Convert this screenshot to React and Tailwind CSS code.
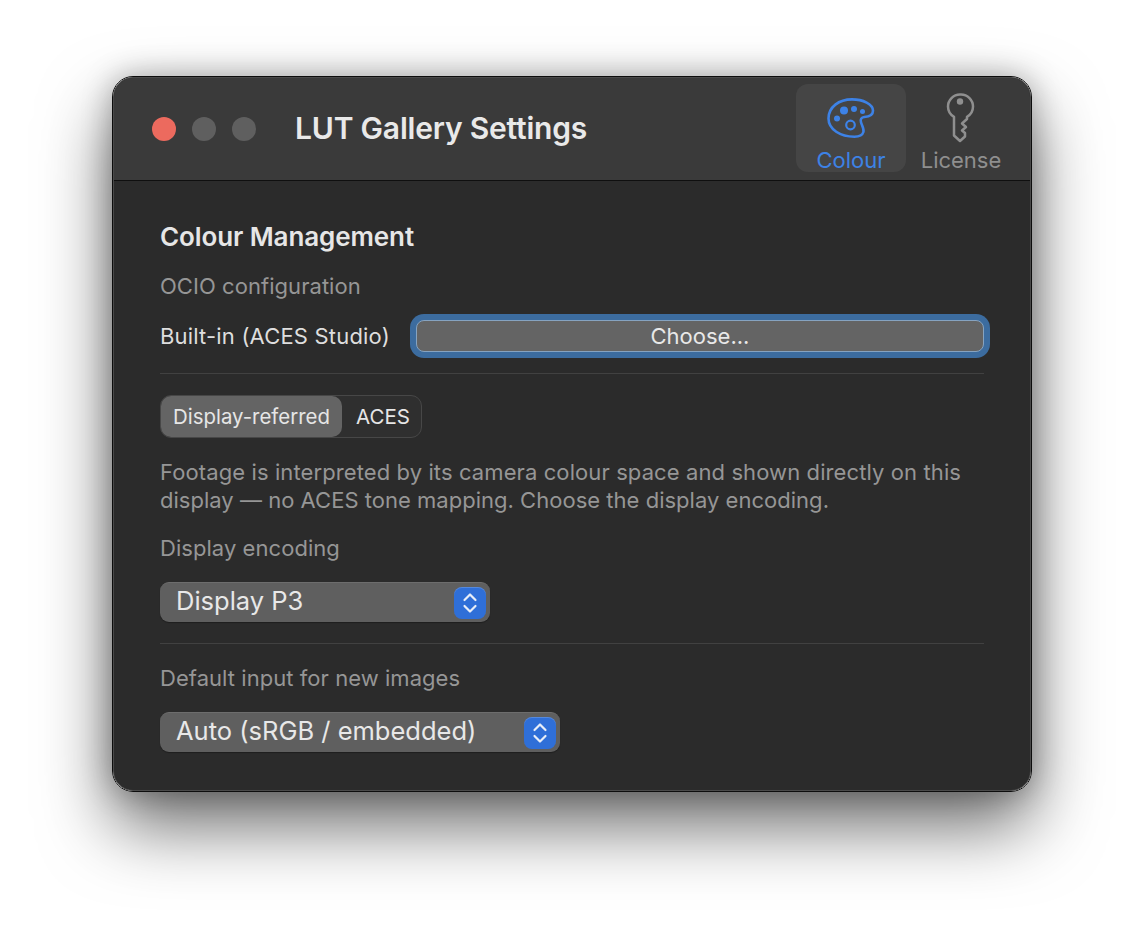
function Palette() {
  return (
    <svg width="52" height="44" viewBox="0 0 52 44" fill="none" className="block">
      <path d="M3.500 22.500C3.500 11 14 3.400 27 3.400c11 0 21 4.600 21 11.300 0 5.200-5.400 6-8.600 6.300-3 .3-4.400 2.200-3.400 5.400 1 3.400 3.300 6.400 2.400 9.600-.9 3-4.200 4.700-9 4.700C15.500 40.700 3.500 33.500 3.500 22.500Z" stroke="#3d82e6" strokeWidth="2.600" strokeLinejoin="round" />
      <circle cx="19" cy="14.500" r="4" fill="#3d82e6" />
      <circle cx="29" cy="13" r="3" fill="#3d82e6" />
      <circle cx="37.500" cy="15.500" r="2.500" fill="#3d82e6" />
      <circle cx="12" cy="22.500" r="3" fill="#3d82e6" />
      <circle cx="25.500" cy="29" r="4.300" stroke="#3d82e6" strokeWidth="2.200" />
    </svg>
  );
}

function Key() {
  return (
    <svg width="30" height="52" viewBox="0 0 30 52" fill="none" className="block">
      <path d="M14 2.500a12 12 0 0 0-12 12c0 4.600 2.500 8.300 6 10.300V43.500L14 49l5-4.500v-3.500l-3-2.500 4-3.500-4-3.500 5-4.500V24.800c3.500-2 6-5.700 6-10.300a12 12 0 0 0-12-12Z" stroke="#8f8f8f" strokeWidth="2.500" strokeLinejoin="round" />
      <circle cx="14" cy="9.500" r="3.200" fill="#8f8f8f" />
    </svg>
  );
}

function Stepper() {
  return (
    <div className="w-8 h-8 rounded-lg bg-[#2f6fd8] flex items-center justify-center shadow-[inset_0_1px_0_rgba(255,255,255,0.18)]">
      <svg width="16" height="24" viewBox="0 0 16 24" fill="none">
        <path d="M2.500 9 8 3.500 13.500 9M2.500 15 8 20.500 13.500 15" stroke="#e8eef8" strokeWidth="2.200" strokeLinecap="round" strokeLinejoin="round" />
      </svg>
    </div>
  );
}

function Select({ label, width }) {
  return (
    <div className={`${width} h-10 mt-5 rounded-[9px] bg-[#5f5f5f] border-t border-[#6d6d6d] flex items-center justify-between pl-4 pr-1 shadow-[0_1px_1px_rgba(0,0,0,0.3)]`}>
      <span className="text-[25.500px] leading-none text-[#e8e8e8] pb-[4px]">{label}</span>
      <Stepper />
    </div>
  );
}

function Label({ children, cls = "mt-5" }) {
  return <div className={`${cls} text-[22px] leading-7 text-[#969696] tracking-[0.05px]`}>{children}</div>;
}

function Divider({ cls }) {
  return <div className={`${cls} h-px bg-[#414141]`} />;
}

export default function App() {
  return (
    <div className="w-[1144px] h-[940px] overflow-hidden bg-white pt-[76px] pl-[112px] font-['Inter','Noto_Sans',sans-serif]">
      <div className="w-[920px] h-[716px] rounded-[21px] border border-[#0d0d0d] shadow-[0_34px_70px_rgba(0,0,0,0.58),0_0_30px_rgba(0,0,0,0.28)]">
        <div className="h-full rounded-[20px] bg-[#2b2b2b] overflow-hidden border border-[#4a4a4a] flex flex-col">
          <header className="h-[103px] shrink-0 bg-[#3a3a3a] border-b border-[#0f0f0f] flex items-start pl-[38px] pr-[14px]">
            <div className="flex gap-4 items-center h-[102px]">
              <span className="w-6 h-6 rounded-full bg-[#ec6a5e]" />
              <span className="w-6 h-6 rounded-full bg-[#5f5f5f]" />
              <span className="w-6 h-6 rounded-full bg-[#5f5f5f]" />
            </div>
            <h1 className="ml-[39px] h-[100px] flex items-center text-[30px] font-semibold text-[#e9e9e9] tracking-[-0.2px] whitespace-nowrap">LUT Gallery Settings</h1>
            <nav className="ml-auto flex pt-[6px]">
              <div className="w-[110px] h-[88px] rounded-xl bg-[#454545] flex flex-col items-center">
                <div className="h-[62px] shrink-0 pt-[12px]"><Palette /></div>
                <span className="text-[22px] leading-7 text-[#3d82e6]">Colour</span>
              </div>
              <div className="w-[110px] h-[88px] flex flex-col items-center">
                <div className="h-[62px] shrink-0 pt-[8px]"><Key /></div>
                <span className="text-[22px] leading-7 text-[#8f8f8f]">License</span>
              </div>
            </nav>
          </header>
          <main className="px-[46px] pt-[42px]">
            <h2 className="text-[26px] leading-7 font-semibold text-[#e6e6e6] tracking-[-0.1px]">Colour Management</h2>
            <Label cls="mt-[21px]">OCIO configuration</Label>
            <div className="mt-4 flex items-center h-10">
              <span className="text-[22px] text-[#dedede] whitespace-nowrap tracking-[0.18px]">Built-in (ACES Studio)</span>
              <button className="ml-auto w-[568px] h-8 rounded-lg bg-[#646464] border border-[#86a3c0] ring-[6px] ring-[#3c6c9f] text-[22px] text-[#e8e8e8] flex items-center justify-center">Choose...</button>
            </div>
            <Divider cls="mt-[17px]" />
            <div className="mt-[21px] w-[262px] h-[43px] rounded-[11px] border border-[#474747] bg-[#2f2f2f] flex items-stretch">
              <div className="w-[181px] rounded-[10px] bg-[#646464] flex items-center justify-center pt-[1px] text-[20.400px] text-[#e6e6e6]">Display-referred</div>
              <div className="flex-1 flex items-center justify-center pt-[1px] pl-[3px] text-[20.500px] text-[#e6e6e6]">ACES</div>
            </div>
            <p className="mt-5 text-[22px] leading-7 text-[#969696] tracking-[0.1px] whitespace-nowrap">
              Footage is interpreted by its camera colour space and shown directly on this<br />
              <span className="tracking-[0.02px]">display — no ACES tone mapping. Choose the display encoding.</span>
            </p>
            <Label>Display encoding</Label>
            <Select label="Display P3" width="w-[330px]" />
            <Divider cls="mt-[21px]" />
            <Label>Default input for new images</Label>
            <Select label="Auto (sRGB / embedded)" width="w-[400px]" />
          </main>
        </div>
      </div>
    </div>
  );
}
